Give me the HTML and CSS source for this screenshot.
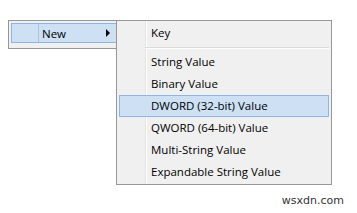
FILE: index.html
```html
<!DOCTYPE html>
<html lang="en">
<head>
    <meta charset="UTF-8">
    <title>New Value Menu</title>
    <link rel="stylesheet" href="styles.css">
</head>
<body>
    <div class="menus">
        <div class="menu">
            <div class="menu-item active">
                <span class="label">New</span>
                <span class="arrow"></span>
            </div>
        </div>
        <div class="submenu">
            <div class="sub-item">Key</div>
            <div class="separator"></div>
            <div class="sub-item">String Value</div>
            <div class="sub-item">Binary Value</div>
            <div class="sub-item active">DWORD (32-bit) Value</div>
            <div class="sub-item">QWORD (64-bit) Value</div>
            <div class="sub-item">Multi-String Value</div>
            <div class="sub-item">Expandable String Value</div>
        </div>
    </div>
    <div class="watermark">wsxdn.com</div>
</body>
</html>
```

FILE: styles.css
```css
body {
    margin: 0;
    background: #fff;
    font-family: "Open Sans", "Liberation Sans", sans-serif;
    font-size: 11.5px;
    color: #000;
}
.menus {
    display: flex;
    align-items: flex-start;
    padding: 20px 0 0 8px;
}
.menu {
    width: 105px;
    height: 25px;
    border: 1px solid #979797;
    border-right: none;
    background: #f0f0f0;
    padding: 2px 0 0 2px;
}
.menu-item {
    display: flex;
    align-items: center;
    height: 20px;
    box-sizing: border-box;
    border: 1px solid #8fb4e0;
    border-right: none;
    background: #cde0f4 linear-gradient(to right, transparent 26px, #a9c4e6 26px, #a9c4e6 27px, transparent 27px);
}
.menu-item .label {
    flex: 1;
    padding-left: 30px;
}
.arrow {
    width: 0;
    height: 0;
    border-top: 4px solid transparent;
    border-bottom: 4px solid transparent;
    border-left: 4px solid #000;
    margin-right: 6px;
}
.submenu {
    width: 210px;
    border: 1px solid #979797;
    padding: 1px 2px;
    background: linear-gradient(to right, transparent 28px, #e2e3e3 28px, #e2e3e3 29px, #fff 29px, #fff 30px, transparent 30px), #f0f0f0;
}
.sub-item {
    height: 22px;
    line-height: 22px;
    padding-left: 32px;
    box-sizing: border-box;
    white-space: nowrap;
}
.sub-item.active {
    background: #cde0f4;
    border: 1px solid #8fb4e0;
    line-height: 20px;
    padding-left: 31px;
}
.separator {
    height: 0;
    margin: 3px 0 2px 26px;
    border-top: 1px solid #dcdcdc;
    border-bottom: 1px solid #fff;
}
.watermark {
    text-align: right;
    padding: 9px 13px 0 0;
    font-family: "DejaVu Sans", sans-serif;
    font-size: 11px;
    color: #333;
}
```
